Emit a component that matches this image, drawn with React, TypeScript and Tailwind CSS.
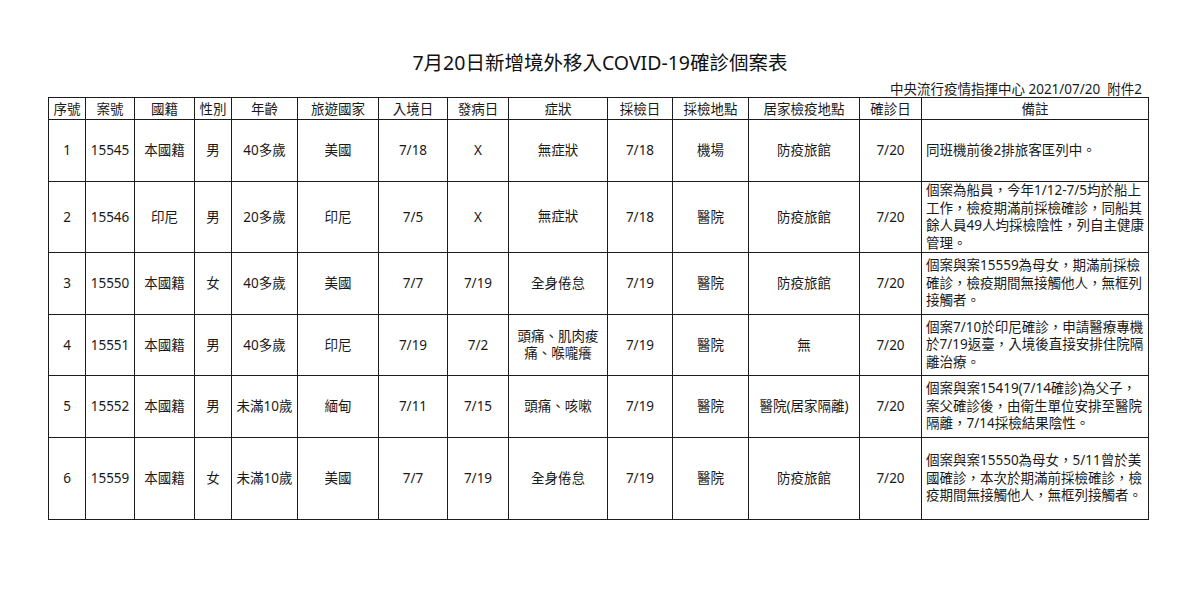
import React from 'react';

type Row = {
  no: string;
  caseNo: string;
  nation: string;
  sex: string;
  age: string;
  travel: string;
  entry: string;
  onset: string;
  symptom: string[];
  testDate: string;
  testPlace: string;
  quarantine: string;
  confirm: string;
  note: string[];
  h: string;
};

const HEADERS = ['序號', '案號', '國籍', '性別', '年齡', '旅遊國家', '入境日', '發病日', '症狀', '採檢日', '採檢地點', '居家檢疫地點', '確診日', '備註'];
const WIDTHS = [37, 49, 60, 37, 66, 81, 69, 61, 99, 65, 76, 111, 62, 227];

const ROWS: Row[] = [
  {
    no: '1', caseNo: '15545', nation: '本國籍', sex: '男', age: '40多歲', travel: '美國', entry: '7/18', onset: 'X',
    symptom: ['無症狀'], testDate: '7/18', testPlace: '機場', quarantine: '防疫旅館', confirm: '7/20',
    note: ['同班機前後2排旅客匡列中。'], h: 'h-[62px]',
  },
  {
    no: '2', caseNo: '15546', nation: '印尼', sex: '男', age: '20多歲', travel: '印尼', entry: '7/5', onset: 'X',
    symptom: ['無症狀'], testDate: '7/18', testPlace: '醫院', quarantine: '防疫旅館', confirm: '7/20',
    note: ['個案為船員，今年1/12-7/5均於船上', '工作，檢疫期滿前採檢確診，同船其', '餘人員49人均採檢陰性，列自主健康', '管理。'],
    h: 'h-[70px]',
  },
  {
    no: '3', caseNo: '15550', nation: '本國籍', sex: '女', age: '40多歲', travel: '美國', entry: '7/7', onset: '7/19',
    symptom: ['全身倦怠'], testDate: '7/19', testPlace: '醫院', quarantine: '防疫旅館', confirm: '7/20',
    note: ['個案與案15559為母女，期滿前採檢', '確診，檢疫期間無接觸他人，無框列', '接觸者。'], h: 'h-[62px]',
  },
  {
    no: '4', caseNo: '15551', nation: '本國籍', sex: '男', age: '40多歲', travel: '印尼', entry: '7/19', onset: '7/2',
    symptom: ['頭痛、肌肉痠', '痛、喉嚨癢'], testDate: '7/19', testPlace: '醫院', quarantine: '無', confirm: '7/20',
    note: ['個案7/10於印尼確診，申請醫療專機', '於7/19返臺，入境後直接安排住院隔', '離治療。'], h: 'h-[61px]',
  },
  {
    no: '5', caseNo: '15552', nation: '本國籍', sex: '男', age: '未滿10歲', travel: '緬甸', entry: '7/11', onset: '7/15',
    symptom: ['頭痛、咳嗽'], testDate: '7/19', testPlace: '醫院', quarantine: '醫院(居家隔離)', confirm: '7/20',
    note: ['個案與案15419(7/14確診)為父子，', '案父確診後，由衛生單位安排至醫院', '隔離，7/14採檢結果陰性。'], h: 'h-[62px]',
  },
  {
    no: '6', caseNo: '15559', nation: '本國籍', sex: '女', age: '未滿10歲', travel: '美國', entry: '7/7', onset: '7/19',
    symptom: ['全身倦怠'], testDate: '7/19', testPlace: '醫院', quarantine: '防疫旅館', confirm: '7/20',
    note: ['個案與案15550為母女，5/11曾於美', '國確診，本次於期滿前採檢確診，檢', '疫期間無接觸他人，無框列接觸者。'], h: 'h-[82px]',
  },
];

const cell = 'border border-[#1c1c1c] p-0 text-center align-middle whitespace-nowrap';

function Lines({ lines }: { lines: string[] }) {
  return (
    <>
      {lines.map((l, i) => (
        <div key={i} className="leading-[17.5px]">{l}</div>
      ))}
    </>
  );
}

export default function App() {
  return (
    <div className="w-[1200px] h-[592px] bg-white text-[#1a1a1a] font-['Noto_Sans','Noto_Sans_CJK_TC',sans-serif] overflow-hidden">
      <div className="pt-[50px] h-[76px] text-center text-[19.5px] leading-[26px] text-[#111]">
        7月20日新增境外移入COVID-19確診個案表
      </div>
      <div className="mt-[5px] h-[16px] pr-[58px] text-right text-[13.5px] leading-[16px]">
        中央流行疫情指揮中心 2021/07/20&nbsp; 附件2
      </div>
      <table className="ml-[48px] w-[1100px] table-fixed border-collapse text-[13.5px]">
        <colgroup>
          {WIDTHS.map((w, i) => (
            <col key={i} style={{ width: w }} />
          ))}
        </colgroup>
        <thead>
          <tr className="h-[22px]">
            {HEADERS.map((h) => (
              <th key={h} className={`${cell} font-normal leading-[20px]`}>{h}</th>
            ))}
          </tr>
        </thead>
        <tbody>
          {ROWS.map((r) => (
            <tr key={r.no} className={r.h}>
              <td className={cell}>{r.no}</td>
              <td className={cell}>{r.caseNo}</td>
              <td className={cell}>{r.nation}</td>
              <td className={cell}>{r.sex}</td>
              <td className={cell}>{r.age}</td>
              <td className={cell}>{r.travel}</td>
              <td className={cell}>{r.entry}</td>
              <td className={cell}>{r.onset}</td>
              <td className={cell}><Lines lines={r.symptom} /></td>
              <td className={cell}>{r.testDate}</td>
              <td className={cell}>{r.testPlace}</td>
              <td className={cell}>{r.quarantine}</td>
              <td className={cell}>{r.confirm}</td>
              <td className={`${cell} !text-left pl-[4px] overflow-hidden`}><Lines lines={r.note} /></td>
            </tr>
          ))}
        </tbody>
      </table>
    </div>
  );
}
